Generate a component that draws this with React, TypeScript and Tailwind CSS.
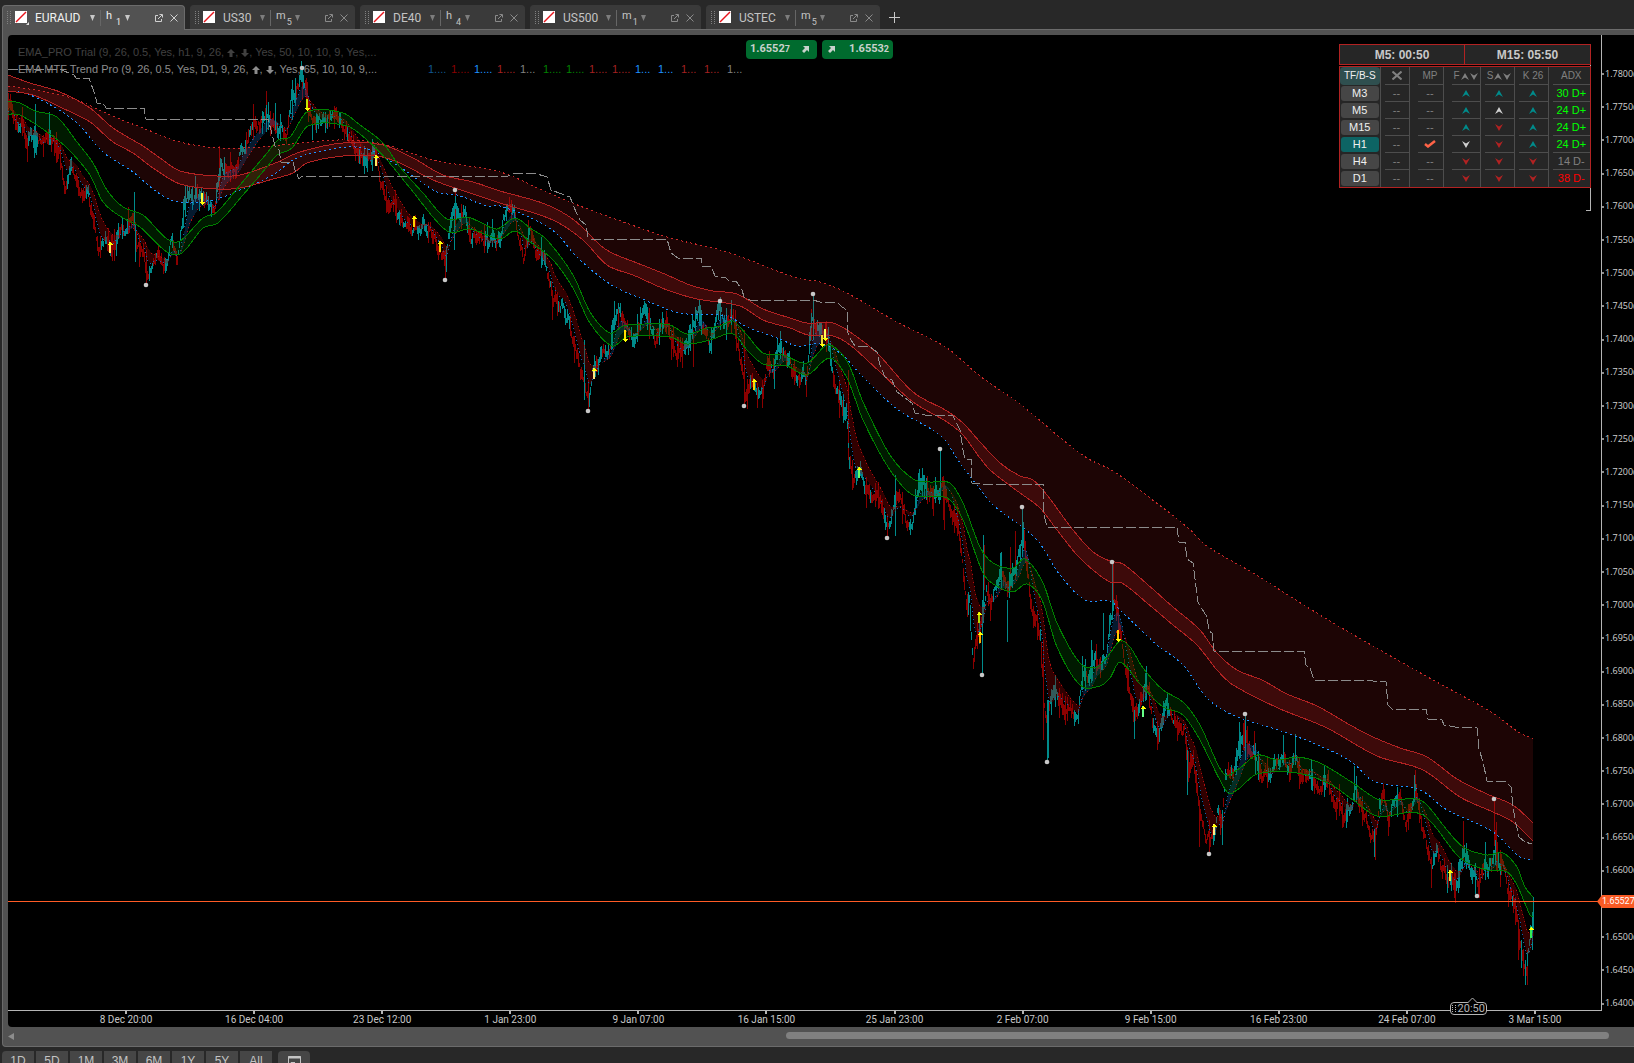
import { useMemo } from "react";

type Point = [number, number];

const TABS = [
  { name: "EURAUD", unit: "h", size: "1", width: "w-[183px]", active: true },
  { name: "US30", unit: "m", size: "5", width: "w-[165px]", active: false },
  { name: "DE40", unit: "h", size: "4", width: "w-[165px]", active: false },
  { name: "US500", unit: "m", size: "1", width: "w-[171px]", active: false },
  { name: "USTEC", unit: "m", size: "5", width: "w-[174px]", active: false },
];

const DATES = [
  "8 Dec 20:00", "16 Dec 04:00", "23 Dec 12:00", "1 Jan 23:00", "9 Jan 07:00", "16 Jan 15:00",
  "25 Jan 23:00", "2 Feb 07:00", "9 Feb 15:00", "16 Feb 23:00", "24 Feb 07:00", "3 Mar 15:00",
];

const PRICES = Array.from({ length: 29 }, (_, i) => (1.78 - i * 0.005).toFixed(4));
// the live price tag sits over this label
const COVERED_PRICE = "1.6550";

const RANGES = ["1D", "5D", "1M", "3M", "6M", "1Y", "5Y", "All"];

const VALUES = [
  { text: "1....", color: "text-[#10568f]" },
  { text: "1....", color: "text-[#8b0000]" },
  { text: "1....", color: "text-[#1e90ff]" },
  { text: "1....", color: "text-[#a52020]" },
  { text: "1...", color: "text-[#808080]" },
  { text: "1....", color: "text-[#008000]" },
  { text: "1....", color: "text-[#008000]" },
  { text: "1....", color: "text-[#a52020]" },
  { text: "1....", color: "text-[#a52020]" },
  { text: "1...", color: "text-[#1e90ff]" },
  { text: "1...", color: "text-[#1e90ff]" },
  { text: "1...", color: "text-[#a52020]" },
  { text: "1...", color: "text-[#a52020]" },
  { text: "1...", color: "text-[#808080]" },
];

// u / d: arrow up / down, t: teal, w: white, r: red
const MATRIX = [
  { tf: "M3", mp: false, marks: ["ut", "ut", "ut"], adx: "30 D+", tone: "text-[#00ff00]" },
  { tf: "M5", mp: false, marks: ["ut", "uw", "ut"], adx: "24 D+", tone: "text-[#00ff00]" },
  { tf: "M15", mp: false, marks: ["ut", "dr", "ut"], adx: "24 D+", tone: "text-[#00ff00]" },
  { tf: "H1", mp: true, marks: ["dw", "dr", "ut"], adx: "24 D+", tone: "text-[#00ff00]" },
  { tf: "H4", mp: false, marks: ["dr", "dr", "dr"], adx: "14 D-", tone: "text-[#808080]" },
  { tf: "D1", mp: false, marks: ["dr", "dr", "dr"], adx: "38 D-", tone: "text-[#ff0000]" },
];

const PRICE_PATH: Point[] = [
  [8, 109], [12, 113], [15, 128], [18, 132], [21, 118], [27, 148], [30, 132], [36, 138], [43, 146], [49, 135],
  [54, 145], [60, 155], [65, 183], [70, 162], [80, 190], [88, 195], [95, 230], [98, 246], [104, 243], [110, 247],
  [116, 235], [125, 226], [133, 222], [137, 248], [143, 250], [147, 274], [153, 258], [160, 262], [166, 266],
  [171, 240], [177, 264], [183, 215], [187, 192], [195, 196], [203, 198], [210, 205], [214, 215], [218, 175],
  [222, 165], [228, 170], [235, 168], [243, 145], [249, 138], [255, 130], [262, 122], [268, 115], [274, 122],
  [280, 128], [286, 135], [292, 90], [296, 92], [301, 76], [304, 88], [308, 110], [313, 118], [320, 120],
  [330, 115], [338, 118], [345, 130], [352, 147], [358, 155], [368, 163], [376, 155], [380, 180], [388, 205],
  [396, 212], [404, 225], [414, 228], [420, 230], [426, 222], [434, 240], [440, 250], [445, 266], [449, 230],
  [455, 215], [464, 215], [470, 235], [478, 240], [488, 245], [496, 240], [500, 232], [504, 215], [512, 208],
  [519, 240], [523, 265], [528, 240], [530, 232], [535, 255], [543, 265], [550, 280], [552, 300], [562, 300],
  [568, 320], [574, 345], [580, 370], [584, 375], [588, 400], [592, 370], [598, 360], [604, 355], [610, 350],
  [614, 320], [618, 312], [624, 325], [632, 340], [640, 322], [645, 315], [655, 338], [665, 320], [670, 335],
  [674, 350], [683, 352], [690, 335], [698, 312], [705, 330], [710, 347], [715, 320], [720, 308], [726, 325],
  [733, 315], [738, 345], [742, 365], [745, 394], [750, 380], [755, 390], [763, 388], [767, 360], [773, 370],
  [780, 348], [786, 360], [794, 375], [803, 376], [806, 392], [809, 345], [811, 315], [813, 320], [818, 328],
  [825, 332], [830, 350], [833, 375], [840, 400], [846, 415], [849, 465], [853, 482], [860, 475], [866, 485],
  [873, 495], [880, 505], [885, 520], [888, 527], [893, 505], [900, 505], [906, 520], [912, 515], [918, 485],
  [925, 490], [932, 495], [940, 485], [944, 482], [950, 500], [957, 530], [962, 560], [966, 612], [969, 595],
  [973, 660], [978, 630], [983, 610], [986, 580], [990, 605], [995, 590], [1000, 570], [1007, 595], [1010, 580],
  [1015, 570], [1020, 550], [1023, 535], [1027, 565], [1032, 610], [1040, 635], [1044, 710], [1047, 725],
  [1050, 710], [1055, 690], [1063, 705], [1072, 713], [1078, 715], [1082, 670], [1088, 685], [1095, 655],
  [1100, 665], [1106, 650], [1109, 615], [1113, 600], [1117, 610], [1120, 630], [1126, 670], [1134, 712],
  [1142, 700], [1146, 682], [1152, 722], [1158, 738], [1164, 715], [1168, 708], [1176, 720], [1184, 730],
  [1188, 768], [1193, 760], [1199, 810], [1205, 830], [1210, 843], [1213, 838], [1217, 815], [1222, 828],
  [1225, 780], [1232, 773], [1238, 755], [1241, 745], [1245, 735], [1248, 745], [1254, 750], [1260, 770],
  [1268, 778], [1276, 768], [1284, 758], [1290, 765], [1295, 752], [1300, 783], [1310, 770], [1320, 785],
  [1328, 780], [1332, 805], [1338, 800], [1344, 815], [1352, 808], [1354, 785], [1360, 800], [1366, 815],
  [1370, 833], [1375, 838], [1379, 800], [1384, 798], [1388, 822], [1393, 797], [1400, 800], [1406, 820],
  [1412, 800], [1415, 785], [1420, 812], [1426, 840], [1431, 870], [1436, 845], [1441, 865], [1448, 880],
  [1455, 883], [1462, 862], [1464, 852], [1470, 870], [1478, 885], [1485, 865], [1488, 870], [1494, 855],
  [1498, 865], [1502, 865], [1508, 895], [1514, 905], [1518, 930], [1521, 952], [1524, 960], [1526, 970],
  [1530, 940], [1532, 925], [1533, 912],
];

// lone long bars: x, high, low
const UP_SPIKES = [
  [35, 104, 150], [49, 112, 145], [134, 192, 225], [135, 225, 262], [195, 176, 200], [275, 103, 130], [292, 80, 120],
  [312, 125, 140], [454, 203, 250], [584, 340, 400], [614, 301, 330], [640, 307, 330], [647, 307, 330], [695, 307, 330],
  [720, 302, 330], [731, 300, 325], [774, 360, 389], [777, 338, 360], [813, 295, 340], [895, 475, 536], [940, 450, 500],
  [983, 535, 620], [982, 600, 674], [1007, 600, 642], [1001, 552, 590], [1022, 508, 550], [1047, 700, 761], [1048, 700, 758],
  [1112, 563, 620], [1103, 613, 650], [1091, 640, 670], [1082, 656, 690], [1146, 666, 700], [1134, 710, 739],
  [1187, 750, 795], [1222, 810, 845], [1239, 722, 755], [1245, 716, 760], [1283, 735, 765], [1295, 734, 765],
  [1354, 766, 800], [1374, 830, 857], [1414, 775, 800], [1485, 842, 880], [1521, 940, 968], [1525, 960, 985],
  [1532, 912, 950], [1533, 897, 930],
];
const DOWN_SPIKES = [
  [27, 140, 162], [146, 250, 283], [219, 146, 200], [253, 104, 140], [266, 91, 125], [302, 69, 100], [445, 250, 279],
  [455, 192, 230], [528, 220, 245], [588, 380, 410], [552, 290, 320], [618, 303, 330], [693, 330, 367], [744, 330, 404],
  [811, 309, 340], [839, 380, 418], [848, 370, 460], [887, 515, 537], [943, 476, 520], [944, 480, 530], [984, 545, 590],
  [1010, 547, 590], [1015, 531, 580], [1113, 563, 610], [1043, 640, 740], [1199, 800, 847], [1209, 820, 852],
  [1254, 731, 760], [1244, 720, 745], [1415, 770, 800], [1463, 821, 860], [1494, 800, 846], [1495, 830, 855],
  [1496, 822, 870], [1500, 850, 887], [1518, 920, 960], [1527, 950, 985],
];

const DAILY_LINE: Point[] = [
  [8, 69], [60, 69], [64, 71], [74, 75], [76, 78], [89, 78], [94, 92], [97, 103], [103, 103], [106, 108], [144, 108],
  [146, 119], [268, 119], [272, 134], [275, 146], [279, 150], [281, 162], [293, 162], [295, 170], [299, 179],
  [302, 176], [508, 176], [513, 173], [534, 173], [547, 177], [551, 190], [570, 197], [576, 212], [580, 220],
  [586, 225], [588, 237], [591, 239], [667, 239], [671, 253], [678, 258], [701, 258], [702, 266], [711, 266],
  [715, 276], [726, 278], [729, 281], [736, 281], [742, 290], [744, 297], [750, 300], [813, 300], [820, 302],
  [838, 303], [842, 307], [847, 310], [848, 333], [851, 340], [855, 346], [870, 347], [877, 352], [880, 365],
  [885, 377], [892, 380], [897, 392], [912, 403], [915, 413], [925, 415], [953, 416], [960, 430], [963, 450],
  [965, 459], [971, 459], [972, 483], [983, 484], [1043, 484], [1044, 515], [1047, 527], [1177, 527], [1179, 542],
  [1185, 542], [1187, 559], [1193, 563], [1198, 602], [1207, 617], [1209, 631], [1212, 633], [1214, 651],
  [1304, 651], [1306, 665], [1310, 668], [1314, 680], [1373, 681], [1386, 682], [1388, 705], [1392, 709],
  [1426, 709], [1428, 719], [1442, 720], [1444, 725], [1455, 727], [1477, 728], [1479, 749], [1483, 762],
  [1487, 781], [1506, 782], [1511, 787], [1513, 807], [1516, 824], [1519, 837], [1525, 842], [1532, 844],
];

const OUTER_TOP: Point[] = [
  [8, 86], [47, 92], [77, 100], [110, 115], [143, 128], [180, 142], [220, 148], [260, 147], [300, 143], [343, 140],
  [383, 144], [433, 160], [500, 172], [540, 189], [580, 206], [618, 220], [667, 237], [727, 252], [797, 278],
  [820, 282], [847, 293], [897, 322], [947, 348], [980, 376], [1020, 404], [1063, 440], [1087, 458], [1113, 471],
  [1150, 498], [1187, 527], [1207, 546], [1253, 573], [1307, 607], [1340, 627], [1433, 680], [1493, 713],
  [1517, 731], [1533, 739],
];
const SLOW_TOP: Point[] = [
  [8, 75], [30, 83], [60, 92], [90, 108], [113, 128], [143, 146], [160, 158], [180, 171], [217, 176], [240, 175],
  [273, 164], [300, 152], [343, 143], [383, 145], [413, 158], [443, 175], [473, 182], [500, 191], [545, 204],
  [574, 220], [600, 245], [612, 253], [637, 263], [667, 275], [690, 285], [713, 291], [737, 294], [763, 309],
  [790, 318], [807, 323], [833, 323], [850, 332], [877, 353], [913, 392], [947, 411], [963, 423], [980, 442],
  [1000, 463], [1020, 476], [1033, 480], [1047, 495], [1073, 530], [1093, 552], [1110, 561], [1123, 564],
  [1147, 584], [1173, 607], [1200, 630], [1217, 653], [1237, 670], [1262, 680], [1287, 694], [1317, 706],
  [1350, 725], [1373, 737], [1400, 748], [1427, 757], [1457, 779], [1487, 794], [1507, 802], [1517, 808], [1533, 823],
];
const SLOW_BOTTOM: Point[] = [
  [8, 91], [33, 95], [60, 107], [90, 122], [113, 142], [133, 153], [153, 168], [180, 184], [217, 189], [240, 188],
  [273, 179], [293, 173], [307, 163], [343, 156], [377, 156], [400, 163], [433, 180], [467, 192], [500, 203],
  [553, 220], [583, 240], [607, 265], [633, 275], [667, 290], [697, 299], [740, 306], [763, 320], [790, 328],
  [808, 335], [833, 336], [850, 345], [880, 372], [913, 402], [947, 422], [963, 435], [980, 458], [990, 470],
  [1020, 493], [1040, 508], [1057, 530], [1077, 555], [1093, 570], [1110, 582], [1122, 583], [1147, 603],
  [1173, 625], [1197, 645], [1217, 670], [1233, 685], [1278, 708], [1327, 728], [1377, 756], [1423, 770],
  [1460, 797], [1493, 812], [1513, 822], [1533, 841],
];
const OUTER_BOTTOM: Point[] = [
  [8, 91], [24, 93], [47, 103], [77, 123], [103, 152], [133, 172], [157, 192], [178, 202], [213, 200], [240, 190],
  [273, 175], [293, 160], [317, 152], [347, 147], [370, 150], [400, 167], [437, 192], [457, 195], [487, 206],
  [500, 206], [535, 220], [557, 234], [577, 257], [610, 284], [640, 298], [680, 313], [727, 316], [747, 327],
  [780, 339], [797, 346], [820, 344], [840, 353], [863, 377], [897, 409], [942, 437], [960, 463], [980, 489],
  [993, 505], [1037, 540], [1060, 575], [1085, 600], [1110, 601], [1120, 610], [1157, 645], [1183, 665],
  [1207, 698], [1233, 715], [1287, 733], [1327, 749], [1353, 763], [1373, 781], [1420, 790], [1447, 810],
  [1493, 832], [1520, 857], [1533, 860],
];
const GREEN_TOP: Point[] = [
  [8, 101], [20, 103], [35, 111], [57, 117], [77, 142], [93, 163], [107, 190], [123, 207], [143, 215], [167, 239],
  [180, 241], [203, 218], [217, 212], [240, 185], [267, 153], [278, 140], [290, 137], [307, 112], [343, 113],
  [360, 125], [383, 143], [400, 167], [423, 193], [447, 219], [467, 217], [480, 222], [497, 229], [515, 218],
  [530, 228], [547, 240], [573, 275], [590, 312], [610, 333], [623, 326], [645, 324], [670, 325], [687, 334],
  [707, 328], [720, 326], [733, 321], [747, 335], [763, 353], [783, 355], [807, 363], [827, 345], [840, 352],
  [850, 367], [863, 402], [890, 455], [913, 479], [930, 482], [950, 483], [963, 503], [980, 547], [993, 563],
  [1013, 568], [1025, 559], [1043, 583], [1057, 623], [1080, 663], [1097, 667], [1108, 656], [1120, 641],
  [1130, 647], [1143, 668], [1163, 690], [1183, 702], [1200, 725], [1223, 773], [1237, 770], [1257, 755],
  [1277, 760], [1297, 757], [1320, 763], [1353, 783], [1377, 799], [1390, 800], [1417, 799], [1427, 805],
  [1447, 830], [1463, 847], [1487, 855], [1503, 853], [1517, 867], [1525, 887], [1533, 897],
];
const GREEN_BOTTOM: Point[] = [
  [8, 114], [20, 115], [47, 132], [67, 148], [90, 175], [103, 202], [123, 218], [140, 227], [167, 252], [182, 253],
  [203, 228], [218, 223], [243, 195], [267, 167], [277, 155], [292, 148], [308, 126], [347, 126], [367, 140],
  [387, 160], [410, 188], [447, 231], [470, 229], [500, 239], [515, 231], [530, 242], [553, 260], [573, 288],
  [590, 323], [612, 346], [627, 337], [670, 337], [687, 344], [710, 340], [733, 334], [747, 350], [763, 364],
  [787, 366], [807, 375], [830, 358], [847, 378], [863, 420], [890, 470], [913, 495], [947, 498], [963, 520],
  [983, 573], [995, 585], [1013, 592], [1027, 584], [1042, 600], [1057, 647], [1080, 685], [1100, 686],
  [1110, 678], [1120, 662], [1140, 684], [1163, 707], [1183, 715], [1200, 740], [1227, 792], [1237, 790],
  [1257, 774], [1297, 773], [1330, 784], [1353, 800], [1377, 816], [1423, 815], [1460, 858], [1487, 870],
  [1507, 872], [1517, 885], [1530, 915], [1533, 917],
];

const SWINGS: Point[] = [
  [146, 285], [302, 68], [445, 280], [455, 190], [588, 411], [720, 301], [744, 406], [813, 294], [887, 538],
  [940, 449], [982, 675], [1022, 507], [1047, 762], [1112, 562], [1209, 854], [1245, 714], [1477, 896], [1494, 799],
];
const BUY_SIGNALS: [number, number, string][] = [
  [110, 242, "#ffee66"], [376, 155, "#ffee66"], [414, 216, "#ffd000"], [440, 241, "#ffd000"], [594, 368, "#ffe680"],
  [754, 379, "#ffd000"], [859, 467, "#66ff66"], [979, 612, "#b3d900"], [980, 632, "#ffaa00"], [1143, 706, "#66ff88"],
  [1214, 824, "#ffee88"], [1450, 870, "#eedd33"], [1531, 927, "#33ee55"],
];
const SELL_SIGNALS: [number, number, string][] = [
  [202, 204, "#ffff33"], [307, 110, "#c8e600"], [625, 341, "#ffe000"], [822, 346, "#eedd33"], [825, 340, "#ffff55"],
  [1118, 641, "#ffc800"],
];

const toPath = (points: Point[]) => "M" + points.map((p) => p.join(" ")).join("L");

// Catmull-Rom spline through the points, as bezier segments
function toCurve(points: Point[]) {
  let d = "";
  for (let i = 0; i < points.length - 1; i++) {
    const a = points[Math.max(i - 1, 0)];
    const b = points[i];
    const c = points[i + 1];
    const e = points[Math.min(i + 2, points.length - 1)];
    const third = (c[0] - b[0]) / 3;
    const slopeB = (c[1] - a[1]) / (c[0] - a[0]);
    const slopeC = (e[1] - b[1]) / (e[0] - b[0]);
    const c1 = (b[1] + slopeB * third).toFixed(1);
    const c2 = (c[1] - slopeC * third).toFixed(1);
    d += `C${(b[0] + third).toFixed(1)} ${c1} ${(c[0] - third).toFixed(1)} ${c2} ${c[0]} ${c[1]}`;
  }
  return d;
}

const toLine = (points: Point[]) => `M${points[0].join(" ")}${toCurve(points)}`;

function toBand(top: Point[], bottom: Point[]) {
  const back = [...bottom].reverse();
  return `${toLine(top)}L${back[0].join(" ")}${toCurve(back)}Z`;
}

function buildBars() {
  let seed = 7;
  const rand = () => {
    seed = (seed * 1664525 + 1013904223) % 4294967296;
    return seed / 4294967296;
  };
  let up = "";
  let down = "";
  let cloudUp = "";
  let cloudDown = "";
  const fastLine: Point[] = [];
  const slowLine: Point[] = [];
  let seg = 0;
  let fast = 112;
  let slow = 108;
  let wave = 0;
  let rising = false;
  for (let x = 8; x <= 1533; x++) {
    while (seg < PRICE_PATH.length - 2 && PRICE_PATH[seg + 1][0] < x) seg++;
    const [x0, y0] = PRICE_PATH[seg];
    const [x1, y1] = PRICE_PATH[seg + 1];
    const base = y0 + ((y1 - y0) * (x - x0)) / (x1 - x0);
    wave = wave * 0.7 + (rand() - 0.5) * 10;
    const slope = (y1 - y0) / (x1 - x0);
    if (rand() < 0.42) rising = rand() > 0.5 + slope * 0.1;
    const reach = 2 + rand() * 6 + (rand() > 0.86 ? 8 : 0);
    const high = Math.round(base + wave - reach);
    const low = Math.round(base + wave + reach);
    if (rising) up += `M${x}.5 ${high}V${low}`;
    else down += `M${x}.5 ${high}V${low}`;
    fast += (base - fast) * 0.2;
    slow += (base - slow) * 0.085;
    fastLine.push([x, Math.round(fast)]);
    slowLine.push([x, Math.round(slow)]);
    const piece = `M${x}.5 ${Math.round(fast)}V${Math.round(slow)}`;
    if (fast > slow) cloudDown += piece;
    else cloudUp += piece;
  }
  for (const [x, a, b] of UP_SPIKES) up += `M${x}.5 ${a}V${b}`;
  for (const [x, a, b] of DOWN_SPIKES) down += `M${x}.5 ${a}V${b}`;
  return { up, down, cloudUp, cloudDown, fastLine: toPath(fastLine), slowLine: toPath(slowLine) };
}

function PricePlot() {
  const bars = useMemo(buildBars, []);
  return (
    <svg
      className="block h-full w-full"
      viewBox="8 35 1593 975"
      preserveAspectRatio="none"
      fill="none"
      shapeRendering="crispEdges"
      aria-label="EURAUD price chart"
    >
      <path d={bars.down} stroke="#8b0000" />
      <path d={bars.up} stroke="#008b8b" />
      <path d={bars.cloudDown} stroke="#8b0000" strokeOpacity="0.35" />
      <path d={bars.cloudUp} stroke="#10569a" strokeOpacity="0.3" />
      <path d={bars.slowLine} stroke="#b01010" strokeDasharray="1 3" />
      <path d={bars.fastLine} stroke="#1464aa" strokeDasharray="1 3" />

      <path d={toBand(OUTER_TOP, OUTER_BOTTOM)} fill="#b22222" fillOpacity="0.16" />
      <path d={toBand(SLOW_TOP, SLOW_BOTTOM)} fill="#b22222" fillOpacity="0.22" />
      <path d={toBand(GREEN_TOP, GREEN_BOTTOM)} fill="#008000" fillOpacity="0.2" />
      <path d={toLine(OUTER_TOP)} stroke="#c82828" strokeDasharray="2 3" />
      <path d={toLine(OUTER_BOTTOM)} stroke="#1e90ff" strokeDasharray="2 3" />
      <path d={toLine(SLOW_TOP)} stroke="#b22222" />
      <path d={toLine(SLOW_BOTTOM)} stroke="#b22222" />
      <path d={toLine(GREEN_TOP)} stroke="#008000" />
      <path d={toLine(GREEN_BOTTOM)} stroke="#008000" />
      <path d={toPath(DAILY_LINE)} stroke="#8c8c8c" strokeDasharray="10 3" />

      {BUY_SIGNALS.map(([x, y, color]) => (
        <g key={`${x}-${y}`}>
          <path d={`M${x} ${y}v11`} stroke={color} strokeWidth="2" />
          <path d={`M${x - 2} ${y + 2.5}h5M${x - 1} ${y + 1.5}h3M${x} ${y + 0.5}h1`} stroke="#ffff00" />
        </g>
      ))}
      {SELL_SIGNALS.map(([x, y, color]) => (
        <g key={`${x}-${y}`}>
          <path d={`M${x} ${y}v-11`} stroke={color} strokeWidth="2" />
          <path d={`M${x - 2} ${y - 1.5}h5M${x - 1} ${y - 0.5}h3M${x} ${y + 0.5}h1`} stroke="#ffff00" />
        </g>
      ))}
      {SWINGS.map(([x, y]) => (
        <circle key={x} cx={x} cy={y} r="2.3" fill="#c8c8c8" shapeRendering="auto" />
      ))}
      <path d="M8 901.5H1601" stroke="#ff5c26" />
      <path d="M1590.5 65V211M1586 210.5h5" stroke="#b4b4b4" />
    </svg>
  );
}

function Caret({ label, active }: { label: string; active: boolean }) {
  return (
    <button aria-label={label} className={active ? "text-[#c8c8c8]" : "text-[#7d7d7d]"}>
      <svg width="5" height="6" viewBox="0 0 5 6" fill="currentColor">
        <path d="M0 0h5L2.5 6z" />
      </svg>
    </button>
  );
}

function Grip() {
  return (
    <svg width="4" height="14" viewBox="0 0 4 14" stroke="#808080" fill="none" strokeDasharray="1 1">
      <path d="M0.5 0v14M3.5 0v14" />
    </svg>
  );
}

function Tab({ tab }: { tab: (typeof TABS)[number] }) {
  const { active } = tab;
  return (
    <div
      className={
        "flex shrink-0 items-center rounded-t border border-b-0 pl-1 font-[Roboto] text-[11px] " +
        tab.width +
        (active
          ? " z-10 -mb-px border-[#6b6b6b] bg-[#525252] pb-px text-[#f0f0f0]"
          : " border-[#3a3a3a] bg-[#3a3a3a] text-[#c4c4c4]")
      }
    >
      <Grip />
      <svg className="mr-1.5 ml-1" width="14" height="14" viewBox="0 0 14 14">
        <path d="M0 0h12v12H0z" fill="#fff" />
        <path d="M1 11L11 1" stroke="#e8141c" strokeWidth="1.5" />
        {active && <path d="M14 11v3h-3z" fill="#e0e0e0" />}
      </svg>
      <span className="flex-1 text-[12px] leading-4">{tab.name}</span>
      <Caret label={`${tab.name} symbol`} active={active} />
      <span className="ml-[5px] h-4 w-px bg-[#666]" />
      <div className="flex w-[83px] items-center">
        <span className="ml-[5px] flex h-5 w-[19px]">
          <span className="leading-4">{tab.unit}</span>
          <span className={"self-end text-[9px] leading-3 " + (tab.unit === "h" ? "ml-1" : "ml-px")}>{tab.size}</span>
        </span>
        <Caret label={`${tab.name} period`} active={active} />
        <button aria-label={`Detach ${tab.name}`} className={"ml-[25px] " + (active ? "text-[#d0d0d0]" : "text-[#8a8a8a]")}>
          <svg width="8" height="8" viewBox="0 0 8 8" fill="none" stroke="currentColor">
            <path d="M3 1.5H0.5v6h6V5M3 5l4-4M4.5 0.5h3v3" />
          </svg>
        </button>
        <button aria-label={`Close ${tab.name}`} className={"ml-[7px] " + (active ? "text-[#d0d0d0]" : "text-[#8a8a8a]")}>
          <svg width="8" height="8" viewBox="0 0 8 8" fill="none" stroke="currentColor">
            <path d="M0.5 0.5l7 7M7.5 0.5l-7 7" />
          </svg>
        </button>
      </div>
    </div>
  );
}

function BlockArrow({ down }: { down?: boolean }) {
  return (
    <svg className="inline" width="8" height="8" viewBox="0 0 8 8" fill="currentColor">
      <path d={down ? "M4 8L0 4h2.5V0h3v4H8z" : "M4 0l4 4H5.5v4h-3V4H0z"} />
    </svg>
  );
}

function TradeArrow() {
  return (
    <svg width="7" height="7" viewBox="0 0 7 7" fill="currentColor">
      <path d="M1 0h6v6L5 4 2 7 0 5l3-3z" />
    </svg>
  );
}

function Mark({ kind }: { kind: string }) {
  const color = kind[1] === "t" ? "text-[#008b8b]" : kind[1] === "w" ? "text-[#d0d0d0]" : "text-[#b22222]";
  return (
    <svg className={"mx-auto " + color} width="8" height="7" viewBox="0 0 8 7" fill="currentColor">
      <path d={kind[0] === "u" ? "M4 0l4 7-4-2.5L0 7z" : "M4 7L0 0l4 2.5L8 0z"} />
    </svg>
  );
}

function SmallArrows() {
  return (
    <svg className="ml-px inline" width="17" height="7" viewBox="0 0 17 7" fill="currentColor">
      <path d="M4 0l4 7-4-2.5L0 7zM13 7L9 0l4 2.5L17 0z" />
    </svg>
  );
}

const CELL = "border-r border-[#4d4d4d] p-0 pl-1 last:border-r-0";
const CELL_WIDE = "border-r border-[#4d4d4d] p-0 pl-2";

function TrendPanel() {
  return (
    <div className="absolute top-[9px] right-[10px] w-[252px] font-['Liberation_Sans']">
      <div className="mb-px grid h-[21px] grid-cols-2 divide-x divide-[#b22222] border border-[#b22222] bg-[#262626] text-center text-[12px] leading-[20px] font-bold text-[#c8c8c8]">
        <span>M5: 00:50</span>
        <span>M15: 05:50</span>
      </div>
      <div className="border border-[#b22222] bg-[#262626]">
        <table className="w-full table-fixed border-collapse text-center text-[11px] text-[#808080]">
          <colgroup>
            <col className="w-[40px]" />
            <col className="w-[29px]" />
            <col className="w-[34px]" />
            <col className="w-[37px]" />
            <col className="w-[34px]" />
            <col className="w-[34px]" />
            <col />
          </colgroup>
          <thead>
            <tr className="h-[18px] text-[10px]">
              <th className="border-r border-[#4d4d4d] p-0 font-normal text-[#f0f0f0]">
                <div className="h-[18px] rounded-sm bg-[#2f4f4f] leading-[18px]">TF/B-S</div>
              </th>
              <th className={CELL} aria-label="Cross">
                <div className="flex h-[18px] items-center justify-center border-b border-[#4d4d4d]">
                  <svg width="10" height="9" viewBox="0 0 10 9" stroke="currentColor" strokeWidth="2">
                    <path d="M0.5 0.5l9 8M9.5 0.5l-9 8" />
                  </svg>
                </div>
              </th>
              {["MP", "F", "S", "K 26", "ADX"].map((name) => (
                <th key={name} className={(name === "MP" || name === "F" ? CELL_WIDE : CELL) + " font-normal"}>
                  <div className="h-[18px] border-b border-[#4d4d4d] leading-[18px] whitespace-nowrap">
                    {name}
                    {name.length === 1 && <SmallArrows />}
                  </div>
                </th>
              ))}
            </tr>
          </thead>
          <tbody>
            {MATRIX.map((row) => (
              <tr key={row.tf} className="group h-[17px]">
                <th className="border-r border-[#4d4d4d] p-0 font-normal text-[#f0f0f0]">
                  <div
                    className={
                      "mx-px h-[15px] rounded-[3px] leading-[15px] " + (row.tf === "H1" ? "bg-[#0d6464]" : "bg-[#464646]")
                    }
                  >
                    {row.tf}
                  </div>
                </th>
                <td className={CELL}>
                  <div className="h-[17px] border-b border-[#4d4d4d] leading-[17px] group-last:border-0">--</div>
                </td>
                <td className={CELL_WIDE}>
                  <div className="flex h-[17px] items-center justify-center border-b border-[#4d4d4d] leading-[17px] group-last:border-0">
                    {row.mp ? (
                      <svg width="12" height="8" viewBox="0 0 12 8" fill="none" stroke="#ff6347" strokeWidth="2.5">
                        <path d="M1 4l3 2.5L11 1" />
                      </svg>
                    ) : (
                      "--"
                    )}
                  </div>
                </td>
                {row.marks.map((kind, i) => (
                  <td key={i} className={i === 0 ? CELL_WIDE : CELL}>
                    <div className="flex h-[17px] items-center border-b border-[#4d4d4d] group-last:border-0">
                      <Mark kind={kind} />
                    </div>
                  </td>
                ))}
                <td className={CELL}>
                  <div className={"h-[17px] border-b border-[#4d4d4d] leading-[17px] group-last:border-0 " + row.tone}>
                    {row.adx}
                  </div>
                </td>
              </tr>
            ))}
          </tbody>
        </table>
      </div>
    </div>
  );
}

function Legend() {
  return (
    <div className="absolute top-[9px] left-[10px] font-['Liberation_Sans'] text-[11px] leading-[17px] whitespace-nowrap">
      <p className="text-[#404040]">
        EMA_PRO Trial (9, 26, 0.5, Yes, h1, 9, 26, <BlockArrow />, <BlockArrow down />, Yes, 50, 10, 10, 9, Yes,...
      </p>
      <div className="flex">
        <p className="w-[410px] text-[#8c8c8c]">
          EMA MTF Trend Pro (9, 26, 0.5, Yes, D1, 9, 26, <BlockArrow />, <BlockArrow down />, Yes, 65, 10, 10, 9,...
        </p>
        {VALUES.map((value, i) => (
          <span key={i} className={"w-[23px] " + value.color}>
            {value.text}
          </span>
        ))}
      </div>
    </div>
  );
}

function QuickTrade() {
  return (
    <div className="absolute top-[5px] left-[738px] flex gap-[5px] font-[Roboto] text-[11px] font-bold text-[#c8d2cc]">
      <button className="flex h-[19px] w-[71px] items-center justify-between rounded bg-[#006b2e] pr-2 pl-1">
        <span>
          1.6552<span className="text-[9px]">7</span>
        </span>
        <TradeArrow />
      </button>
      <button className="flex h-[19px] w-[71px] items-center justify-between rounded bg-[#006b2e] pr-1 pl-1.5">
        <TradeArrow />
        <span>
          1.6553<span className="text-[9px]">2</span>
        </span>
      </button>
    </div>
  );
}

function PriceAxis() {
  return (
    <div className="relative flex w-[33px] shrink-0 flex-col justify-between border-l border-[#b4b4b4] pt-[33px] font-['Open_Sans'] text-[9px] leading-[12px] text-[#d0d0d0]">
      {PRICES.map((price) => (
        <div key={price} className="flex h-3 items-center overflow-hidden whitespace-nowrap">
          <span className="mr-px h-0.5 w-0.5 shrink-0 bg-[#8c8c8c]" />
          {price !== COVERED_PRICE && (
            <span>
              {price}
              <span className="text-[7px]">0</span>
            </span>
          )}
        </div>
      ))}
      <div className="absolute top-[860px] -left-[5px] flex h-[13px] font-[Roboto] leading-[13px] text-white">
        <svg width="5" height="13" viewBox="0 0 5 13" fill="#f95a24">
          <path d="M5 0v13L0 6.5z" />
        </svg>
        <span className="w-[33px] bg-[#f95a24]">1.65527</span>
      </div>
    </div>
  );
}

function TimeMarker() {
  return (
    <div className="absolute right-[114px] -bottom-[5px] flex h-[13px] w-[37px] items-center justify-between rounded-sm border border-[#b4b4b4] bg-black px-px font-[Roboto] text-[11px] leading-[11px] text-[#b4b4b4]">
      <svg className="absolute -top-[6px] left-[16px]" width="11" height="6" viewBox="0 0 11 6" fill="#000" stroke="#b4b4b4">
        <path d="M0.5 6l5-5 5 5" />
      </svg>
      <svg width="4" height="8" viewBox="0 0 4 8" stroke="#b4b4b4" strokeDasharray="1 1">
        <path d="M0.5 0v8M3.5 0v8" />
      </svg>
      <span>20:50</span>
    </div>
  );
}

export default function App() {
  return (
    <div className="flex h-screen flex-col overflow-hidden bg-[#282828]">
      <header className="flex h-[29px] shrink-0 gap-[5px] pt-[5px] pl-[2px]">
        {TABS.map((tab) => (
          <Tab key={tab.name} tab={tab} />
        ))}
        <button aria-label="Add chart" className="ml-1 text-[#c8c8c8]">
          <svg width="11" height="11" viewBox="0 0 11 11" stroke="currentColor">
            <path d="M5.5 0v11M0 5.5h11" />
          </svg>
        </button>
      </header>

      <main className="ml-[2px] flex min-h-0 flex-1 flex-col rounded-bl border-t border-b border-l border-[#6b6b6b] bg-[#525252] pt-[5px] pl-[5px]">
        <div className="flex min-h-0 flex-1 flex-col overflow-hidden rounded-l bg-black">
          <div className="flex min-h-0 flex-1">
            <div className="relative min-w-0 flex-1">
              <PricePlot />
              <Legend />
              <QuickTrade />
              <TrendPanel />
              <TimeMarker />
            </div>
            <PriceAxis />
          </div>
          <div className="mr-[32px] grid h-[17px] shrink-0 grid-cols-12 border-t border-[#b4b4b4] pr-[3px] pl-[54px] font-[Roboto] text-[10px] leading-[12px] text-[#c8c8c8]">
            {DATES.map((date) => (
              <div key={date} className="flex flex-col items-center whitespace-nowrap">
                <span className="h-[3px] w-0.5 shrink-0 bg-[#b4b4b4]" />
                {date}
              </div>
            ))}
          </div>
        </div>
        <div className="flex h-[19px] shrink-0 items-center">
          <button aria-label="Scroll left" className="text-[#8c8c8c]">
            <svg width="6" height="7" viewBox="0 0 6 7" fill="currentColor">
              <path d="M6 0v7L0 3.5z" />
            </svg>
          </button>
          <div className="mr-[25px] ml-[772px] flex-1">
            <div className="mb-0.5 h-[7px] rounded-full bg-[#808080]" />
          </div>
        </div>
      </main>

      <footer className="mt-1 flex h-3 shrink-0 gap-0.5 pl-[2px] font-['Liberation_Sans'] text-[12px] text-[#c4c4c4]">
        {RANGES.map((range) => (
          <button key={range} className="h-5 w-8 shrink-0 bg-[#464646] leading-5 first:rounded-tl">
            {range}
          </button>
        ))}
        <button aria-label="Go to date" className="ml-1 flex h-5 w-8 shrink-0 justify-center rounded-t bg-[#464646] pt-1">
          <svg width="13" height="12" viewBox="0 0 13 12" fill="none" stroke="currentColor">
            <path d="M0.5 12V1.5h12V12" />
            <path d="M0 2.5h13" strokeWidth="2" />
            <path d="M3 11V7.5h4" />
          </svg>
        </button>
      </footer>
    </div>
  );
}
